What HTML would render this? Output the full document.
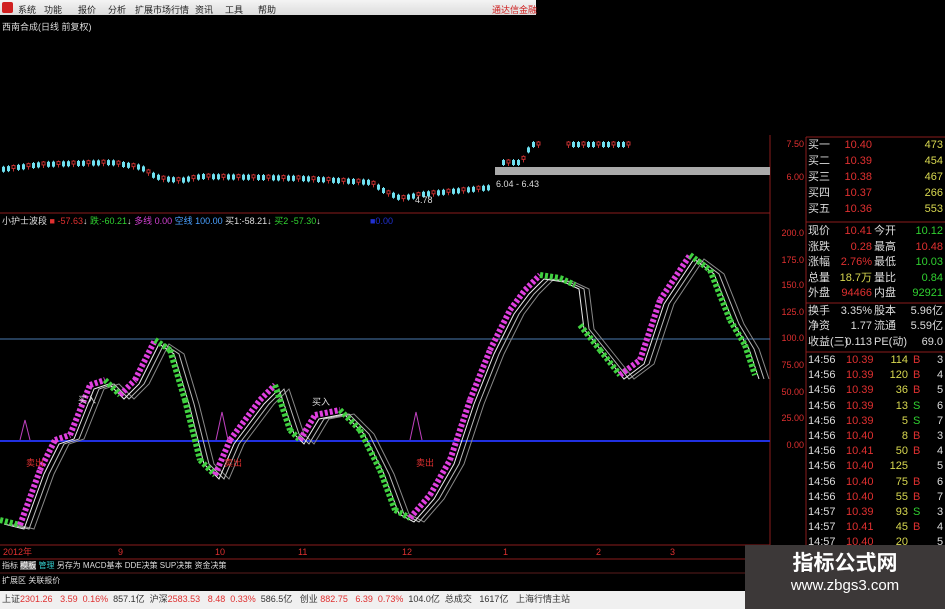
<!DOCTYPE html>
<html><head><meta charset="utf-8"><style>
*{margin:0;padding:0;box-sizing:border-box}
body{width:945px;height:609px;background:#000;overflow:hidden;position:relative;font-family:"Liberation Sans","Noto Sans CJK SC",sans-serif;font-size:10px;color:#ccc}
.a{position:absolute;white-space:nowrap;line-height:1}
#menu{position:absolute;left:0;top:0;width:536px;height:15px;background:linear-gradient(#f4f4f4,#dcdcdc);color:#222;font-size:9px}
#menu span{position:absolute;top:3px;white-space:nowrap}
.r{color:#e03030}.g{color:#30d030}.y{color:#d8d850}.w{color:#ddd}.b{color:#4aa0ff}
#rp .a{font-size:11px}
</style></head><body>
<div id="menu"><div class="a" style="left:2px;top:2px;width:11px;height:11px;background:#d02020;border-radius:2px"></div>
<span style="left:18px">系统</span><span style="left:44px">功能</span><span style="left:78px">报价</span><span style="left:108px">分析</span><span style="left:135px">扩展市场行情</span><span style="left:195px">资讯</span><span style="left:225px">工具</span><span style="left:258px">帮助</span><span style="left:492px;color:#d02020">通达信金融</span></div>
<div class="a w" style="left:2px;top:23px;font-size:9px">西南合成(日线 前复权)</div>
<svg class="a" style="left:0;top:0" width="945" height="609" id="sv">
<line x1="0" y1="213" x2="770" y2="213" stroke="#8a1c1c"/>
<line x1="770" y1="135" x2="770" y2="545" stroke="#8a1c1c"/>
<line x1="806" y1="137" x2="806" y2="545" stroke="#8a1c1c"/>
<line x1="806" y1="137" x2="945" y2="137" stroke="#8a1c1c"/>
<line x1="806" y1="222" x2="945" y2="222" stroke="#8a1c1c"/>
<line x1="806" y1="303" x2="945" y2="303" stroke="#8a1c1c"/>
<line x1="806" y1="352" x2="945" y2="352" stroke="#8a1c1c"/>
<line x1="0" y1="339" x2="770" y2="339" stroke="#4a7ab0"/>
<line x1="0" y1="441" x2="770" y2="441" stroke="#2030e0" stroke-width="2"/>
<rect x="495" y="167" width="275" height="8" fill="#aaa"/>
<line x1="0" y1="545" x2="770" y2="545" stroke="#8a1c1c"/>
<line x1="0" y1="559" x2="770" y2="559" stroke="#8a1c1c"/>
<line x1="0" y1="573" x2="770" y2="573" stroke="#5a1c1c"/>
<g id="cd"></g><g id="wv" fill="none"></g>
<path d="M20 440 L25 420 L30 440 M216 440 L222 412 L228 440 M410 440 L416 412 L422 440" stroke="#c040c0" fill="none"/>
</svg>
<div class="a w" style="left:496px;top:180px;font-size:9px">6.04 - 6.43</div>
<div class="a w" style="left:415px;top:196px;font-size:9px">4.78</div>
<div class="a" style="left:2px;top:217px;font-size:9px"><span class="w">小护士波段</span> <span class="r">■ -57.63</span><span class="w">↓</span> <span class="g">跌:-60.21</span><span class="w">↓</span> <span style="color:#d040d0">多线 0.00</span> <span class="b">空线 100.00</span> <span class="w">买1:-58.21↓</span> <span class="g">买2 -57.30</span><span class="w">↓</span></div>
<div class="a" style="left:370px;top:217px;font-size:9px;color:#2030d0">■0.00</div>
<div class="a w" style="left:78px;top:396px;font-size:9px">买入</div>
<div class="a w" style="left:312px;top:398px;font-size:9px">买入</div>
<div class="a r" style="left:26px;top:459px;font-size:9px">卖出</div>
<div class="a r" style="left:224px;top:459px;font-size:9px">卖出</div>
<div class="a r" style="left:416px;top:459px;font-size:9px">卖出</div>
<div id="ax"></div>
<div id="rp"></div>
<div class="a r" style="left:3px;top:548px;font-size:9px">2012年</div>
<div id="dt"></div>
<div class="a w" style="left:2px;top:562px;font-size:8px">指标 <span style="background:#666;color:#fff">模板</span> <span style="color:#3cc">管理</span> 另存为 MACD基本 DDE决策 SUP决策 资金决策</div>
<div class="a w" style="left:2px;top:577px;font-size:8px">扩展区 关联报价</div>
<div class="a" style="left:0;top:591px;width:945px;height:18px;background:#f0f0f0;color:#333;font-size:9px;padding:4px 2px">上证<span class="r">2301.26</span> &nbsp; <span class="r">3.59 &nbsp;0.16%</span> &nbsp;857.1亿 &nbsp;沪深<span class="r">2583.53</span> &nbsp; <span class="r">8.48 &nbsp;0.33%</span> &nbsp;586.5亿 &nbsp; 创业 <span class="r">882.75</span> &nbsp; <span class="r">6.39 &nbsp;0.73%</span> &nbsp;104.0亿 &nbsp;总成交 &nbsp; 1617亿 &nbsp; 上海行情主站</div>
<div class="a" style="left:745px;top:545px;width:200px;height:64px;background:#3c3838;color:#fff;text-align:center">
<div style="font-size:21px;font-weight:bold;margin-top:8px">指标公式网</div><div style="font-size:15px;margin-top:4px">www.zbgs3.com</div></div>
<script>
var ns="http://www.w3.org/2000/svg";
function el(p,t,a){var e=document.createElementNS(ns,t);for(var k in a)e.setAttribute(k,a[k]);p.appendChild(e);return e}
var cd=document.getElementById('cd');
var C=[[0,167],[40,162],[110,160],[140,165],[150,172],[160,176],[180,178],[200,174],[260,175],[300,176],[370,180],[385,190],[400,196],[420,192],[460,188],[490,185],[498,160],[520,160],[530,142],[640,142]];
function cy(x){for(var i=0;i<C.length-1;i++){if(x<=C[i+1][0]){var t=(x-C[i][0])/(C[i+1][0]-C[i][0]);return C[i][1]+t*(C[i+1][1]-C[i][1])}}return 142}
for(var x=2;x<632;x+=5){if(x>490&&x<498)continue;if(x>540&&x<566)continue;var y=cy(x)+((x*7)%5)-2;var up=(x*13)%3==0;
el(cd,'line',{x1:x+1.5,y1:y-3,x2:x+1.5,y2:y+4,stroke:up?'#c03030':'#60d8e8'});
el(cd,'rect',{x:x,y:y-2,width:3,height:up?3:5,fill:up?'#000':'#70e0f0',stroke:up?'#c03030':'none'});}
var P=[[0,520],[20,525],[40,470],[55,440],[70,435],[90,385],[105,380],[120,395],[135,380],[155,340],[170,350],[185,400],[200,460],[215,475],[230,440],[245,420],[260,400],[275,385],[290,430],[300,440],[315,415],[340,410],[360,430],[380,470],[395,510],[410,518],[430,495],[450,460],[470,400],[490,350],[510,310],[525,290],[540,275],[560,278],[575,285],[580,325],[600,350],[620,375],[640,360],[660,300],[690,255],[710,270],[730,320],[745,345],[755,375]];
var wv=document.getElementById('wv');
[[14,'#888'],[9,'#bbb'],[4,'#eee']].forEach(function(o){el(wv,'polyline',{points:P.map(function(p){return (p[0]+o[0])+','+(p[1]+4)}).join(' '),stroke:o[1],'stroke-width':1})});
for(var i=0;i<P.length-1;i++){var a=P[i],b=P[i+1];if(a[0]==575)continue;el(wv,'line',{x1:a[0],y1:a[1],x2:b[0],y2:b[1],stroke:b[1]<a[1]?'#e040e0':'#40d040','stroke-width':6,'stroke-dasharray':'3 2'})}
var ax=document.getElementById('ax'),h='';
[['7.50',140],['6.00',173],['200.0',229],['175.0',256],['150.0',281],['125.0',308],['100.0',334],['75.00',361],['50.00',388],['25.00',414],['0.00',441]].forEach(function(v){h+='<div class="a r" style="left:772px;width:32px;text-align:right;top:'+v[1]+'px;font-size:9px">'+v[0]+'</div>'});
ax.innerHTML=h;
var dt='';[['9',118],['10',215],['11',298],['12',402],['1',503],['2',596],['3',670]].forEach(function(v){dt+='<div class="a r" style="left:'+v[1]+'px;top:548px;font-size:9px">'+v[0]+'</div>'});document.getElementById('dt').innerHTML=dt;
var rp='';function row(y,l,v,c,l2,v2,c2){rp+='<div class="a w" style="left:808px;top:'+y+'px">'+l+'</div><div class="a '+c+'" style="left:838px;width:34px;text-align:right;top:'+y+'px">'+v+'</div>';if(l2)rp+='<div class="a w" style="left:874px;top:'+y+'px">'+l2+'</div>';rp+='<div class="a '+c2+'" style="left:900px;width:43px;text-align:right;top:'+y+'px">'+v2+'</div>'}
[['买一','10.40','473'],['买二','10.39','454'],['买三','10.38','467'],['买四','10.37','266'],['买五','10.36','553']].forEach(function(r,i){row(140+i*16,r[0],r[1],'r','',r[2],'y')});
row(226,'现价','10.41','r','今开','10.12','g');row(242,'涨跌','0.28','r','最高','10.48','r');row(257,'涨幅','2.76%','r','最低','10.03','g');row(273,'总量','18.7万','y','量比','0.84','g');row(288,'外盘','94466','r','内盘','92921','g');
row(306,'换手','3.35%','w','股本','5.96亿','w');row(321,'净资','1.77','w','流通','5.59亿','w');row(337,'收益(三)','0.113','w','PE(动)','69.0','w');
var T=[['10.39','114','B'],['10.39','120','B'],['10.39','36','B'],['10.39','13','S'],['10.39','5','S'],['10.40','8','B'],['10.41','50','B'],['10.40','125',''],['10.40','75','B'],['10.40','55','B'],['10.39','93','S'],['10.41','45','B'],['10.40','20','']];
T.forEach(function(t,i){var y=355+i*15.2;rp+='<div class="a w" style="left:808px;top:'+y+'px">'+(i>9?'14:57':'14:56')+'</div><div class="a r" style="left:846px;top:'+y+'px">'+t[0]+'</div><div class="a y" style="left:880px;width:28px;text-align:right;top:'+y+'px">'+t[1]+'</div><div class="a '+(t[2]=='S'?'g':'r')+'" style="left:913px;top:'+y+'px">'+t[2]+'</div><div class="a w" style="left:937px;top:'+y+'px">'+(3+i%5)+'</div>'});
document.getElementById('rp').innerHTML=rp;
</script>
</body></html>
